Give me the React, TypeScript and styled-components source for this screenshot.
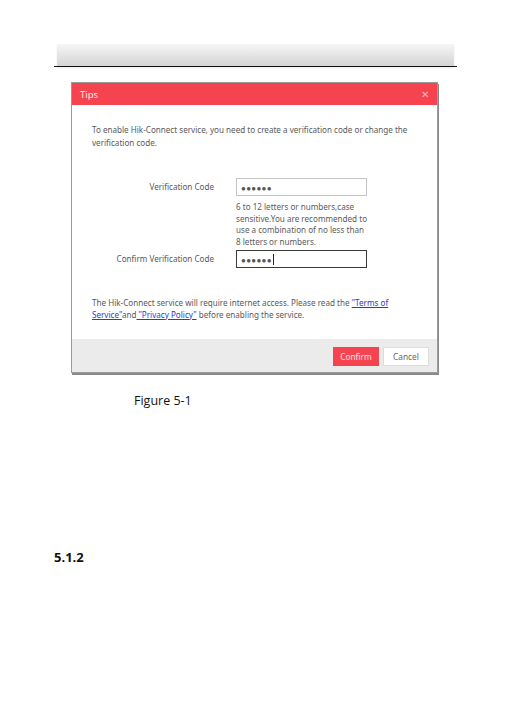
import styled, { createGlobalStyle } from "styled-components"

const GlobalStyle = createGlobalStyle`
	html, body {
		margin: 0;
		padding: 0;
		background: #ffffff;
	}
	body {
		font-family: "Noto Sans", "Open Sans", sans-serif;
	}
`

const Page = styled.div`
	width: 510px;
	height: 720px;
	padding-top: 44px;
	box-sizing: border-box;
`

const HeaderBar = styled.div`
	margin: 0 56px 0 57px;
	height: 22px;
	background: linear-gradient(#f6f6f6, #d4d4d4);
	box-shadow: 0 2px 2px rgba(0, 0, 0, 0.08);
`

const Rule = styled.div`
	margin: 0 53px 0 54px;
	height: 1px;
	background: #111;
`

const Dialog = styled.div`
	margin: 15px 0 0 71px;
	width: 367px;
	height: 291px;
	box-sizing: border-box;
	border: 1px solid #9a9a9a;
	box-shadow: 1px 2px 0 #8a8a8a;
	display: flex;
	flex-direction: column;
	background: #fff;
	font-size: 8.1px;
	color: #5a5a5a;
`

const TitleBar = styled.div`
	height: 22px;
	background: #f5434f;
	display: flex;
	align-items: center;
	justify-content: space-between;
	padding: 0 8px 0 8px;
	color: #ffe9ea;
	font-size: 9.5px;
`

const Close = styled.span`
	font-size: 10px;
	color: #ffb4b8;
`

const Body = styled.div`
	flex: 1;
	padding: 18px 20px 0 20px;
`

const Intro = styled.p`
	margin: 0;
	line-height: 13px;
`

const Form = styled.div`
	margin-top: 29px;
	display: grid;
	grid-template-columns: 122px 131px;
	column-gap: 22px;
	align-items: start;
`

const Label = styled.div`
	text-align: right;
	line-height: 18px;
	height: 18px;
`

const Input = styled.div<{ $focused?: boolean }>`
	height: 18px;
	box-sizing: border-box;
	border: 1px solid ${(p) => (p.$focused ? "#3a3a3a" : "#c4c4c4")};
	padding-left: 4px;
	display: flex;
	align-items: center;
	letter-spacing: 0.3px;
	color: #555;
	font-size: 8px;
`

const Caret = styled.span`
	display: inline-block;
	width: 1px;
	height: 11px;
	background: #222;
	margin-left: 1px;
`

const Hint = styled.div`
	grid-column: 2;
	margin: 5px -10px 3px 0;
	line-height: 11.5px;
	color: #5c5c5c;
	white-space: nowrap;
`

const Notice = styled.p`
	margin: 29px 0 0;
	line-height: 11.5px;
`

const Link = styled.a`
	color: #2a3bd0;
	text-decoration: underline;
`

const Footer = styled.div`
	height: 33px;
	background: #ebebeb;
	display: flex;
	justify-content: flex-end;
	align-items: flex-start;
	gap: 4px;
	padding: 8px 8px 0 0;
	box-sizing: border-box;
`

const Button = styled.button<{ $primary?: boolean }>`
	width: 46px;
	height: 19px;
	border: 1px solid ${(p) => (p.$primary ? "#f5434f" : "#dcdcdc")};
	background: ${(p) => (p.$primary ? "#f5434f" : "#ffffff")};
	color: ${(p) => (p.$primary ? "#ffe3e5" : "#666")};
	font-family: inherit;
	font-size: 8.3px;
	padding: 0;
`

const Caption = styled.div`
	margin: 20px 0 0 134px;
	font-family: "Open Sans", "Noto Sans", sans-serif;
	font-size: 12.5px;
	color: #111;
	line-height: 16px;
`

const Section = styled.div`
	margin: 139px 0 0 54px;
	font-family: "Open Sans", "Noto Sans", sans-serif;
	font-weight: 700;
	font-size: 13px;
	color: #111;
`

export default function App() {
	return (
		<Page>
			<GlobalStyle />
			<HeaderBar />
			<Rule />
			<Dialog>
				<TitleBar>
					<span>Tips</span>
					<Close>✕</Close>
				</TitleBar>
				<Body>
					<Intro>
						To enable Hik-Connect service, you need to create a verification code or change the
						verification code.
					</Intro>
					<Form>
						<Label>Verification Code</Label>
						<Input>●●●●●●</Input>
						<Hint>
							6 to 12 letters or numbers,case
							<br />
							sensitive.You are recommended to
							<br />
							use a combination of no less than
							<br />8 letters or numbers.
						</Hint>
						<Label>Confirm Verification Code</Label>
						<Input $focused>
							●●●●●●
							<Caret />
						</Input>
					</Form>
					<Notice>
						The Hik-Connect service will require internet access. Please read the{" "}
						<Link>"Terms of Service"</Link>and<Link> "Privacy Policy"</Link> before enabling
						the service.
					</Notice>
				</Body>
				<Footer>
					<Button $primary>Confirm</Button>
					<Button>Cancel</Button>
				</Footer>
			</Dialog>
			<Caption>Figure 5-1</Caption>
			<Section>5.1.2</Section>
		</Page>
	)
}
